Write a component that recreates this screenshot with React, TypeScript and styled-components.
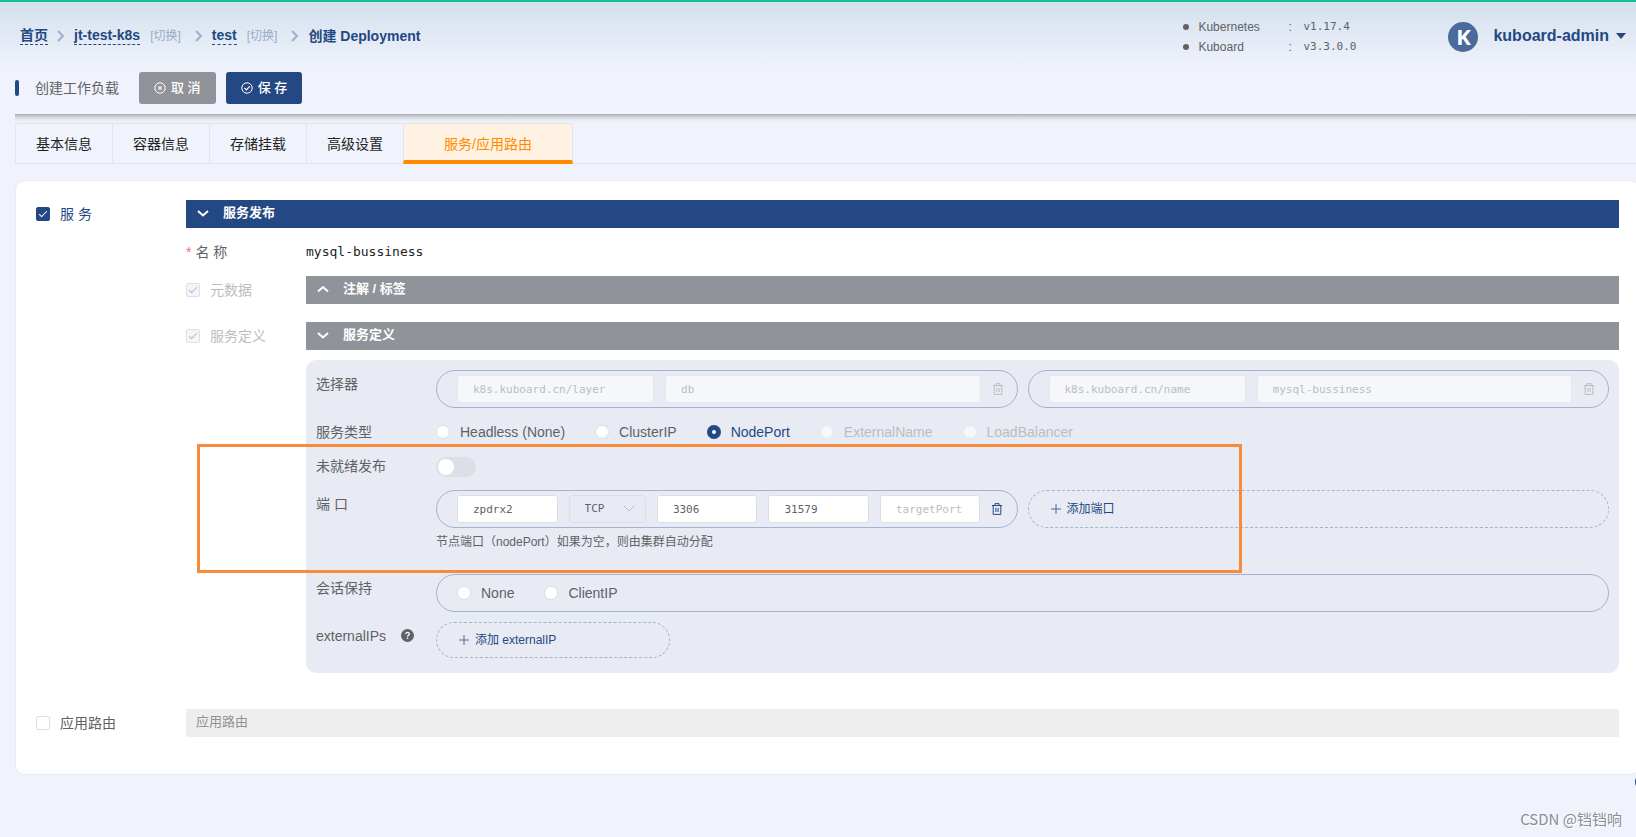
import React, { useState } from "react";
import styled, { createGlobalStyle, css } from "styled-components";

const color = {
  primary: "#234883",
  grey: "#909399",
  text: "#606266",
  muted: "#bbbdc1",
  page: "#f0f3fc",
  panel: "#e8ebf3",
  line: "#dcdfe6",
  pill: "#a3b4cf",
  orange: "#ff8a00",
};

const sans = `"Liberation Sans", "Noto Sans CJK SC", sans-serif`;
const mono = `"DejaVu Sans Mono", "Noto Sans CJK SC", monospace`;

const GlobalStyle = createGlobalStyle`
  *, *::before, *::after { box-sizing: border-box; }
  body {
    margin: 0;
    background: ${color.page};
    color: ${color.text};
    font: 14px/20px ${sans};
    overflow-x: hidden;
  }
  button, input, select { font: inherit; color: inherit; margin: 0; }
  button { border: 0; padding: 0; background: none; cursor: pointer; }
  ul { margin: 0; padding: 0; list-style: none; }
`;

const Page = styled.div`
  position: relative;
  min-height: 100vh;
  overflow-x: hidden;
  border-top: 2px solid #12bf8f;
`;

/* ---------- header ---------- */

const TopBar = styled.header`
  display: flex;
  align-items: center;
  height: 68px;
  padding: 0 10px 0 20px;
  background: linear-gradient(#d4e0ed, ${color.page});
`;

const Breadcrumb = styled.nav`
  display: flex;
  align-items: center;
  flex: 1;
  font-weight: bold;
  line-height: 17px;
  color: ${color.primary};
  white-space: nowrap;
  svg { margin: 0 9px; }
`;

const CrumbLink = styled.a`
  color: inherit;
  text-decoration: none;
  border-bottom: 1px dashed ${color.primary};
`;

const SwitchLink = styled.a`
  margin: 0 5px 0 10px;
  font-size: 12px;
  font-weight: normal;
  color: #9aaac8;
  text-decoration: none;
`;

const VersionList = styled.ul`
  width: 265px;
  padding-top: 2px;
  font-size: 12px;
`;

const VersionItem = styled.li`
  display: grid;
  grid-template-columns: 15px 90px 15px 1fr;
  align-items: center;
  &::before {
    content: "";
    width: 6px;
    height: 6px;
    border-radius: 50%;
    background: ${color.text};
  }
  b { font: 11px/20px ${mono}; }
`;

const UserMenu = styled.button`
  display: flex;
  align-items: center;
  font-size: 16px;
  font-weight: bold;
  color: ${color.primary};
`;

const Avatar = styled.span`
  width: 30px;
  height: 30px;
  margin: 2px 15px 0 0;
  border-radius: 50%;
  background: #4a6a9c;
  color: #fff;
  font: bold 22px/28px "Open Sans", ${sans};
  text-align: center;
`;

const Caret = styled.span`
  margin-left: 7px;
  border: 5px solid transparent;
  border-top: 6px solid ${color.primary};
  border-bottom: 0;
`;

const Toolbar = styled.div`
  display: flex;
  align-items: center;
  gap: 10px;
  height: 44px;
  margin-left: 15px;
  padding-bottom: 8px;
`;

const Title = styled.h1`
  display: flex;
  align-items: center;
  gap: 16px;
  margin: 0 10px 0 0;
  font-size: 14px;
  font-weight: normal;
  &::before {
    content: "";
    width: 4px;
    height: 16px;
    border-radius: 2px;
    background: ${color.primary};
  }
`;

const ActionButton = styled.button<{ $bg: string }>`
  display: flex;
  align-items: center;
  gap: 5px;
  height: 32px;
  padding: 0 15px;
  border-radius: 3px;
  background: ${(p) => p.$bg};
  color: #fff;
  font-size: 13px;
  font-weight: 500;
`;

const HeaderShadow = styled.div`
  height: 9px;
  margin-left: 15px;
  background: linear-gradient(#acadb1, #d3d5dc 35%, #e9ecf4 70%, ${color.page});
`;

/* ---------- tabs ---------- */

const Tabs = styled.div`
  display: flex;
  height: 41px;
  margin-left: 15px;
  border-bottom: 1px solid #e2e5ee;
`;

const Tab = styled.button<{ $active: boolean }>`
  height: 41px;
  padding: 0 20px;
  border: solid #e2e5ee;
  border-width: 1px 0 1px 1px;
  color: #222;
  &:first-child { border-top-left-radius: 4px; }
  ${(p) =>
    p.$active &&
    css`
      padding: 3px 40px 0;
      border-bottom: 4px solid ${color.orange};
      border-right-width: 1px;
      border-top-right-radius: 4px;
      background: #fff2e2;
      color: ${color.orange};
    `}
`;

/* ---------- content ---------- */

const Card = styled.main`
  margin: 16px -4px 0 15px;
  padding: 19px 20px 37px;
  border: 1px solid #e8ebf3;
  border-radius: 10px;
  background: #fff;
`;

const Section = styled.section`
  display: grid;
  grid-template-columns: 150px minmax(0, 1fr);
  & + & { margin-top: 36px; }
`;

const SubRow = styled.div<{ $height?: number; $gap?: number }>`
  display: grid;
  grid-template-columns: 120px minmax(0, 1fr);
  align-items: center;
  min-height: ${(p) => p.$height ?? 28}px;
  margin-bottom: ${(p) => p.$gap ?? 0}px;
`;

const CheckLabel = styled.label<{ $tone: string }>`
  display: flex;
  align-items: center;
  gap: 10px;
  height: 28px;
  color: ${(p) => p.$tone};
`;

const CheckBox = styled.input.attrs({ type: "checkbox" })`
  appearance: none;
  display: grid;
  justify-content: center;
  width: 14px;
  height: 14px;
  border: 1px solid ${color.line};
  border-radius: 2px;
  background: #fff;
  &:checked { background: ${color.primary}; border-color: ${color.primary}; }
  &:checked::after {
    content: "";
    width: 4px;
    height: 8px;
    margin-top: 1px;
    border: solid #fff;
    border-width: 0 1px 1px 0;
    transform: rotate(45deg);
  }
  &:disabled { background: #f2f6fc; border-color: ${color.line}; }
  &:disabled::after { border-color: #b4b8c0; }
`;

const Banner = styled.button<{ $bg: string }>`
  display: flex;
  align-items: center;
  gap: 14px;
  width: 100%;
  height: 28px;
  padding: 0 11px 2px;
  background: ${(p) => p.$bg};
  color: #fff;
  font-size: 13px;
  font-weight: bold;
`;

const EmptyBanner = styled.div`
  height: 28px;
  padding: 0 10px;
  background: #eee;
  color: ${color.grey};
  font-size: 13px;
  line-height: 26px;
`;

const NameLabel = styled.div`
  &::before { content: "*"; margin-right: 4px; color: #f56c6c; }
`;

const NameValue = styled.div`
  font: 13px/20px ${mono};
  color: #222;
`;

const Panel = styled.div`
  margin: 10px 0 0 120px;
  padding: 10px 10px 15px;
  border-radius: 10px;
  background: ${color.panel};
`;

const Field = styled.div<{ $gap?: number }>`
  display: grid;
  grid-template-columns: 120px minmax(0, 1fr);
  min-height: 28px;
  margin-bottom: ${(p) => p.$gap ?? 10}px;
`;

const FieldLabel = styled.div`
  display: flex;
  align-items: center;
  gap: 15px;
  height: 27px;
`;

const Columns = styled.div`
  display: grid;
  grid-template-columns: 1fr 1fr;
  gap: 10px;
`;

const Pill = styled.div<{ $cols: string }>`
  display: grid;
  grid-template-columns: ${(p) => p.$cols};
  align-items: center;
  gap: 11px;
  height: 38px;
  padding: 0 13px 0 20px;
  border: 1px solid ${color.pill};
  border-radius: 19px;
`;

const TextInput = styled.input`
  width: 100%;
  min-width: 0;
  height: 28px;
  padding: 0 15px;
  border: 1px solid ${color.line};
  border-radius: 3px;
  background: #fff;
  font: 11px/20px ${mono};
  &::placeholder { color: ${color.muted}; }
  &:disabled { background: #f5f7fa; border-color: #e4e7ed; color: ${color.muted}; }
`;

const SelectWrap = styled.div`
  position: relative;
  svg { position: absolute; right: 11px; top: 10px; pointer-events: none; }
`;

const Select = styled.select`
  appearance: none;
  display: block;
  width: 100%;
  height: 28px;
  padding: 0 15px;
  border: 1px solid ${color.line};
  border-radius: 3px;
  background: transparent;
  font: 11px/20px ${mono};
`;

const IconButton = styled.button`
  display: flex;
  width: 12px;
  color: ${color.primary};
  &:disabled { color: ${color.muted}; }
`;

const AddButton = styled.button`
  display: flex;
  align-items: center;
  gap: 6px;
  height: 38px;
  padding: 0 22px;
  border: 1px dashed ${color.pill};
  border-radius: 19px;
  color: ${color.primary};
  font-size: 12px;
`;

const AddIpButton = styled(AddButton)`
  width: 234px;
  height: 36px;
  border-radius: 18px;
`;

const RadioGroup = styled.div`
  display: flex;
  align-items: center;
  gap: 30px;
`;

const RadioLabel = styled.label<{ $state: "on" | "off" | "disabled" }>`
  display: flex;
  align-items: center;
  gap: 10px;
  white-space: nowrap;
  color: ${(p) =>
    ({ on: color.primary, off: color.text, disabled: color.muted })[p.$state]};
`;

const RadioDot = styled.input.attrs({ type: "radio" })`
  appearance: none;
  width: 14px;
  height: 14px;
  border: 1px solid ${color.line};
  border-radius: 50%;
  background: #fff;
  &:checked { border: 5px solid ${color.primary}; }
  &:disabled { background: #f5f7fa; border-color: #e4e7ed; }
`;

const Toggle = styled.input.attrs({ type: "checkbox", role: "switch" })`
  appearance: none;
  width: 40px;
  height: 20px;
  margin: 5px 0 0;
  padding: 2px;
  border-radius: 10px;
  background: ${color.line};
  &::after {
    content: "";
    display: block;
    width: 16px;
    height: 16px;
    border-radius: 50%;
    background: #fff;
  }
  &:checked { background: ${color.primary}; }
  &:checked::after { margin-left: 20px; }
`;

const Hint = styled.p`
  margin: 0;
  font-size: 12px;
  line-height: 28px;
`;

/* ---------- overlays ---------- */

const Highlight = styled.div`
  position: absolute;
  left: 197px;
  top: 442px;
  width: 1045px;
  height: 129px;
  border: 3px solid #f88a3b;
  pointer-events: none;
`;

const Watermark = styled.div`
  position: absolute;
  right: 14px;
  bottom: 8px;
  font: 15px/20px "Noto Sans CJK SC", sans-serif;
  color: #8b8d92;
  text-shadow: 1px 1px 0 #fff;
`;

const FloatingHandle = styled.button`
  position: absolute;
  right: -17px;
  top: 771px;
  width: 18px;
  height: 18px;
  border-radius: 50%;
  background: ${color.primary};
`;

/* ---------- icons ---------- */

const stroke = { fill: "none", stroke: "currentColor", "aria-hidden": true } as const;

const CrumbArrow = () => (
  <svg {...stroke} width="8" height="12" viewBox="0 0 8 12" stroke="#a0aecb" strokeWidth="2">
    <path d="M1 1l5 5-5 5" />
  </svg>
);

const Chevron = ({ up = false }: { up?: boolean }) => (
  <svg {...stroke} width="12" height="12" viewBox="0 0 12 12" strokeWidth="2">
    <path d={up ? "M1 8.500l5-4.500 5 4.500" : "M1 4l5 4.500 5-4.500"} />
  </svg>
);

const Plus = () => (
  <svg {...stroke} width="10" height="10" viewBox="0 0 10 10">
    <path d="M5 0v10M0 5h10" strokeWidth="0.8" />
  </svg>
);

const Trash = () => (
  <svg {...stroke} width="12" height="12" viewBox="0 0 12 12">
    <path d="M1 2.500h10M4 2.500V.6h4v1.900M2.200 2.500v8.900h7.600V2.500M4.900 4.800v4.200M7.100 4.800v4.200" />
  </svg>
);

const CircleCross = () => (
  <svg {...stroke} width="12" height="12" viewBox="0 0 12 12">
    <circle cx="6" cy="6" r="5.200" />
    <path d="M4.400 4.400l3.200 3.200M7.600 4.400L4.400 7.600" strokeWidth="1.200" />
  </svg>
);

const CircleCheck = () => (
  <svg {...stroke} width="12" height="12" viewBox="0 0 12 12">
    <circle cx="6" cy="6" r="5.200" />
    <path d="M3.500 6l1.900 1.900 3.300-3.500" strokeWidth="1.200" />
  </svg>
);

const Question = () => (
  <svg {...stroke} width="13" height="13" viewBox="0 0 13 13">
    <circle cx="6.500" cy="6.500" r="6.500" fill="currentColor" stroke="none" />
    <path d="M4.700 5.200c0-2.300 3.600-2.300 3.600-.2 0 1.300-1.800 1.300-1.800 2.700M6.500 8.800v1.300" stroke="#fff" strokeWidth="1.300" />
  </svg>
);

/* ---------- page parts ---------- */

const tabs = ["基本信息", "容器信息", "存储挂载", "高级设置", "服务/应用路由"];
const selectors = [
  ["k8s.kuboard.cn/layer", "db"],
  ["k8s.kuboard.cn/name", "mysql-bussiness"],
];
const serviceTypes = [
  { name: "Headless (None)" },
  { name: "ClusterIP" },
  { name: "NodePort" },
  { name: "ExternalName", disabled: true },
  { name: "LoadBalancer", disabled: true },
];

interface RadiosProps {
  name: string;
  label: string;
  options: { name: string; disabled?: boolean }[];
  initial?: string;
}

const Radios = ({ name, label, options, initial = "" }: RadiosProps) => {
  const [value, setValue] = useState(initial);
  return (
    <RadioGroup role="radiogroup" aria-label={label}>
      {options.map((o) => (
        <RadioLabel
          key={o.name}
          $state={o.disabled ? "disabled" : value === o.name ? "on" : "off"}
        >
          <RadioDot
            name={name}
            disabled={o.disabled}
            checked={value === o.name}
            onChange={() => setValue(o.name)}
          />
          {o.name}
        </RadioLabel>
      ))}
    </RadioGroup>
  );
};

export default function App() {
  const [tab, setTab] = useState(tabs[4]);
  return (
    <>
      <GlobalStyle />
      <Page>
        <TopBar>
          <Breadcrumb>
            <CrumbLink href="#home">首页</CrumbLink>
            <CrumbArrow />
            <CrumbLink href="#cluster">jt-test-k8s</CrumbLink>
            <SwitchLink href="#switch-cluster">[切换]</SwitchLink>
            <CrumbArrow />
            <CrumbLink href="#namespace">test</CrumbLink>
            <SwitchLink href="#switch-namespace">[切换]</SwitchLink>
            <CrumbArrow />
            <span>创建 Deployment</span>
          </Breadcrumb>
          <VersionList>
            <VersionItem>
              <span>Kubernetes</span>
              <span>:</span>
              <b>v1.17.4</b>
            </VersionItem>
            <VersionItem>
              <span>Kuboard</span>
              <span>:</span>
              <b>v3.3.0.0</b>
            </VersionItem>
          </VersionList>
          <UserMenu>
            <Avatar>K</Avatar>
            kuboard-admin
            <Caret />
          </UserMenu>
        </TopBar>

        <Toolbar>
          <Title>创建工作负载</Title>
          <ActionButton $bg={color.grey}>
            <CircleCross />取 消
          </ActionButton>
          <ActionButton $bg={color.primary}>
            <CircleCheck />保 存
          </ActionButton>
        </Toolbar>
        <HeaderShadow />

        <Tabs role="tablist">
          {tabs.map((t) => (
            <Tab
              key={t}
              role="tab"
              aria-selected={t === tab}
              $active={t === tab}
              onClick={() => setTab(t)}
            >
              {t}
            </Tab>
          ))}
        </Tabs>

        <Card>
          <Section>
            <CheckLabel $tone={color.primary}>
              <CheckBox defaultChecked />服 务
            </CheckLabel>
            <div>
              <Banner $bg={color.primary}>
                <Chevron />服务发布
              </Banner>
              <SubRow $height={48}>
                <NameLabel>名 称</NameLabel>
                <NameValue>mysql-bussiness</NameValue>
              </SubRow>
              <SubRow $gap={18}>
                <CheckLabel $tone={color.muted}>
                  <CheckBox defaultChecked disabled />元数据
                </CheckLabel>
                <Banner $bg={color.grey}>
                  <Chevron up />注解 / 标签
                </Banner>
              </SubRow>
              <SubRow>
                <CheckLabel $tone={color.muted}>
                  <CheckBox defaultChecked disabled />服务定义
                </CheckLabel>
                <Banner $bg={color.grey}>
                  <Chevron />服务定义
                </Banner>
              </SubRow>

              <Panel>
                <Field>
                  <FieldLabel>选择器</FieldLabel>
                  <Columns>
                    {selectors.map(([key, value]) => (
                      <Pill key={key} $cols="5fr 8fr 12px">
                        <TextInput aria-label="键" defaultValue={key} disabled />
                        <TextInput aria-label="值" defaultValue={value} disabled />
                        <IconButton aria-label="删除" disabled>
                          <Trash />
                        </IconButton>
                      </Pill>
                    ))}
                  </Columns>
                </Field>
                <Field $gap={6}>
                  <FieldLabel>服务类型</FieldLabel>
                  <Radios
                    name="type"
                    label="服务类型"
                    options={serviceTypes}
                    initial="NodePort"
                  />
                </Field>
                <Field>
                  <FieldLabel as="label" htmlFor="not-ready">
                    未就绪发布
                  </FieldLabel>
                  <Toggle id="not-ready" />
                </Field>
                <Field $gap={18}>
                  <FieldLabel>端 口</FieldLabel>
                  <div>
                    <Columns>
                      <Pill $cols="13fr 10fr 13fr 13fr 13fr 12px">
                        <TextInput aria-label="名称" defaultValue="zpdrx2" />
                        <SelectWrap>
                          <Select aria-label="协议" defaultValue="TCP">
                            <option>TCP</option>
                            <option>UDP</option>
                          </Select>
                          <svg {...stroke} width="12" height="8" viewBox="0 0 12 8" stroke={color.muted}>
                            <path d="M1 1l5 5 5-5" />
                          </svg>
                        </SelectWrap>
                        <TextInput aria-label="port" defaultValue="3306" />
                        <TextInput aria-label="nodePort" defaultValue="31579" />
                        <TextInput aria-label="targetPort" placeholder="targetPort" />
                        <IconButton aria-label="删除">
                          <Trash />
                        </IconButton>
                      </Pill>
                      <AddButton>
                        <Plus />添加端口
                      </AddButton>
                    </Columns>
                    <Hint>节点端口（nodePort）如果为空，则由集群自动分配</Hint>
                  </div>
                </Field>
                <Field>
                  <FieldLabel>会话保持</FieldLabel>
                  <Pill $cols="1fr">
                    <Radios
                      name="affinity"
                      label="会话保持"
                      options={[{ name: "None" }, { name: "ClientIP" }]}
                    />
                  </Pill>
                </Field>
                <Field $gap={0}>
                  <FieldLabel>
                    externalIPs
                    <Question />
                  </FieldLabel>
                  <AddIpButton>
                    <Plus />添加 externalIP
                  </AddIpButton>
                </Field>
              </Panel>
            </div>
          </Section>

          <Section>
            <CheckLabel $tone={color.text}>
              <CheckBox />应用路由
            </CheckLabel>
            <EmptyBanner>应用路由</EmptyBanner>
          </Section>
        </Card>

        <Highlight />
        <FloatingHandle aria-label="展开" />
        <Watermark>CSDN @铛铛响</Watermark>
      </Page>
    </>
  );
}
